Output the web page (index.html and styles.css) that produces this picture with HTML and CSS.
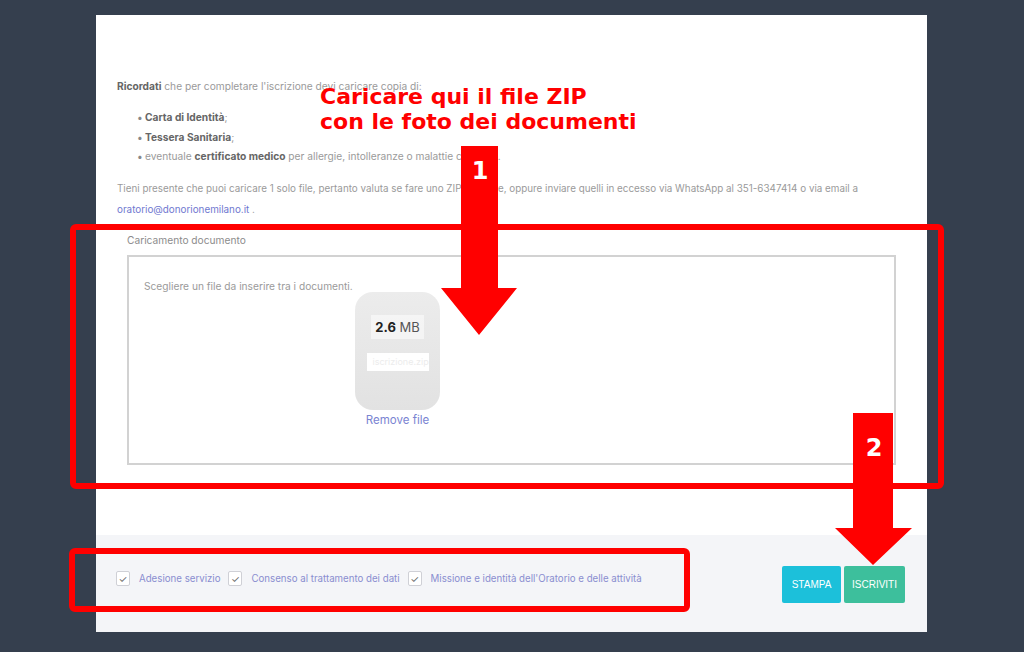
FILE: index.html
```html
<!DOCTYPE html>
<html lang="it">
<head>
<meta charset="utf-8">
<title>Iscrizione</title>
<link rel="stylesheet" href="styles.css">
</head>
<body>
<div class="panel">
  <div class="content">
    <p class="intro"><b>Ricordati</b> che per completare l'iscrizione devi caricare copia di:</p>
    <ul class="docs">
      <li><b>Carta di Identità</b>;</li>
      <li><b>Tessera Sanitaria</b>;</li>
      <li>eventuale <b>certificato medico</b> per allergie, intolleranze o malattie croniche.</li>
    </ul>
    <p class="note">Tieni presente che puoi caricare 1 solo file, pertanto valuta se fare uno ZIP con i file, oppure inviare quelli in eccesso via WhatsApp al 351-6347414 o via email a <a class="mail">oratorio@donorionemilano.it</a> .</p>
    <div class="upload">
      <div class="upload-label">Caricamento documento</div>
      <div class="dropzone">
        <p class="dz-msg">Scegliere un file da inserire tra i documenti.</p>
        <div class="preview">
          <div class="thumb">
            <div class="size"><b>2.6</b> MB</div>
            <div class="fname">iscrizione.zip</div>
          </div>
          <a class="remove">Remove file</a>
        </div>
      </div>
    </div>
  </div>
  <div class="footer">
    <div class="checks">
      <label class="chk"><span class="box">✓</span>Adesione servizio</label>
      <label class="chk"><span class="box">✓</span>Consenso al trattamento dei dati</label>
      <label class="chk"><span class="box">✓</span>Missione e identità dell'Oratorio e delle attività</label>
    </div>
    <div class="actions">
      <button class="btn btn-print">STAMPA</button>
      <button class="btn btn-sub">ISCRIVITI</button>
    </div>
  </div>
</div>

<div class="callout">Caricare qui il file ZIP<br>con le foto dei documenti</div>
<svg class="marks" width="1024" height="652" viewBox="0 0 1024 652">
  <polygon points="461,146 498,146 498,288 517,288 479,335 441,288 461,288" fill="#ff0000"/>
  <polygon points="853,413 893,413 893,528 912,528 873,565 835,528 853,528" fill="#ff0000"/>
  <rect x="73" y="227" width="868" height="259" rx="3" fill="none" stroke="#ff0000" stroke-width="6"/>
  <rect x="72" y="551" width="615" height="58" rx="3" fill="none" stroke="#ff0000" stroke-width="6"/>
  <text x="480" y="179" class="num">1</text>
  <text x="874" y="456" class="num">2</text>
</svg>
</body>
</html>
```

FILE: styles.css
```css
* { box-sizing: border-box; }
html, body {
  margin: 0;
  padding: 0;
}
body {
  width: 1024px;
  height: 652px;
  background: #353f4e;
  font-family: Inter, "Noto Sans", sans-serif;
  position: relative;
  overflow: hidden;
  padding-top: 15px;
}
.panel {
  margin-left: 96px;
  width: 831px;
  height: 617px;
  background: #ffffff;
  display: flex;
  flex-direction: column;
}
.content {
  flex: 1;
  padding: 61px 21px 0 21px;
  font-size: 10.2px;
  color: #9a9a9a;
}
.content b { color: #666; font-weight: 700; }
.intro {
  margin: 0;
  line-height: 20px;
}
.docs {
  margin: 12px 0 0 0;
  padding-left: 20px;
  line-height: 19.5px;
  list-style: none;
}
.docs li::before {
  content: "•";
  display: inline-block;
  width: 8px;
  color: #888;
}
.note {
  margin: 11px 0 0 0;
  line-height: 21px;
  font-size: 9.85px;
}
.mail { color: #6f78d0; }
.upload {
  margin: 12px 10px 0 10px;
}
.upload-label {
  line-height: 16px;
  color: #8c8c8c;
}
.dropzone {
  margin-top: 7px;
  height: 210px;
  border: 2px solid #d2d2d2;
  padding: 23px 15px 0 15px;
}
.dz-msg {
  margin: 0;
  line-height: 12px;
  color: #9a9a9a;
}
.preview {
  margin-left: 211px;
  width: 85px;
  display: flex;
  flex-direction: column;
  align-items: center;
}
.thumb {
  width: 85px;
  height: 118px;
  border-radius: 18px;
  background: linear-gradient(#ececec, #e2e2e2);
  display: flex;
  flex-direction: column;
  align-items: center;
  padding-top: 23px;
}
.size {
  background: rgba(255,255,255,0.5);
  padding: 3px 4px;
  font-size: 13px;
  color: #555;
  line-height: 18px;
}
.size b { color: #222; font-weight: 700; }
.fname {
  margin-top: 14px;
  background: #ffffff;
  color: #ececec;
  font-size: 9px;
  line-height: 18px;
  padding: 0 6px;
  width: 62px;
  overflow: hidden;
  white-space: nowrap;
}
.remove {
  margin-top: 2px;
  line-height: 16px;
  font-size: 11.5px;
  color: #7a84d2;
}
.footer {
  height: 97px;
  background: #f4f5f8;
  display: flex;
  align-items: center;
  justify-content: space-between;
  padding: 0 22px 0 20px;
}
.checks {
  display: flex;
  align-items: center;
  margin-top: -10px;
  font-size: 9.7px;
  color: #8a8ed0;
}
.chk {
  display: flex;
  align-items: center;
  margin-right: 8px;
}
.box {
  width: 14px;
  height: 15px;
  border: 1px solid #cfd0d6;
  background: #fff;
  border-radius: 2px;
  display: flex;
  align-items: center;
  justify-content: center;
  font-size: 10px;
  color: #666;
  margin-right: 9px;
}
.actions {
  display: flex;
  gap: 3px;
  margin-top: 1px;
}
.btn {
  height: 37px;
  border: none;
  border-radius: 2px;
  color: #fff;
  font-family: "Liberation Sans", sans-serif;
  font-size: 10px;
  font-weight: 400;
  padding: 0;
}
.btn-print { width: 59px; background: #1cc0da; }
.btn-sub { width: 61px; background: #3dbf9c; }

.callout {
  position: absolute;
  left: 320px;
  top: 84px;
  color: #ff0000;
  font-family: "DejaVu Sans", sans-serif;
  font-weight: 700;
  font-size: 22px;
  line-height: 25px;
}
.marks {
  position: absolute;
  left: 0;
  top: 0;
}
.num {
  fill: #ffffff;
  font-family: "DejaVu Sans", sans-serif;
  font-weight: 700;
  font-size: 24px;
  text-anchor: middle;
}
```
